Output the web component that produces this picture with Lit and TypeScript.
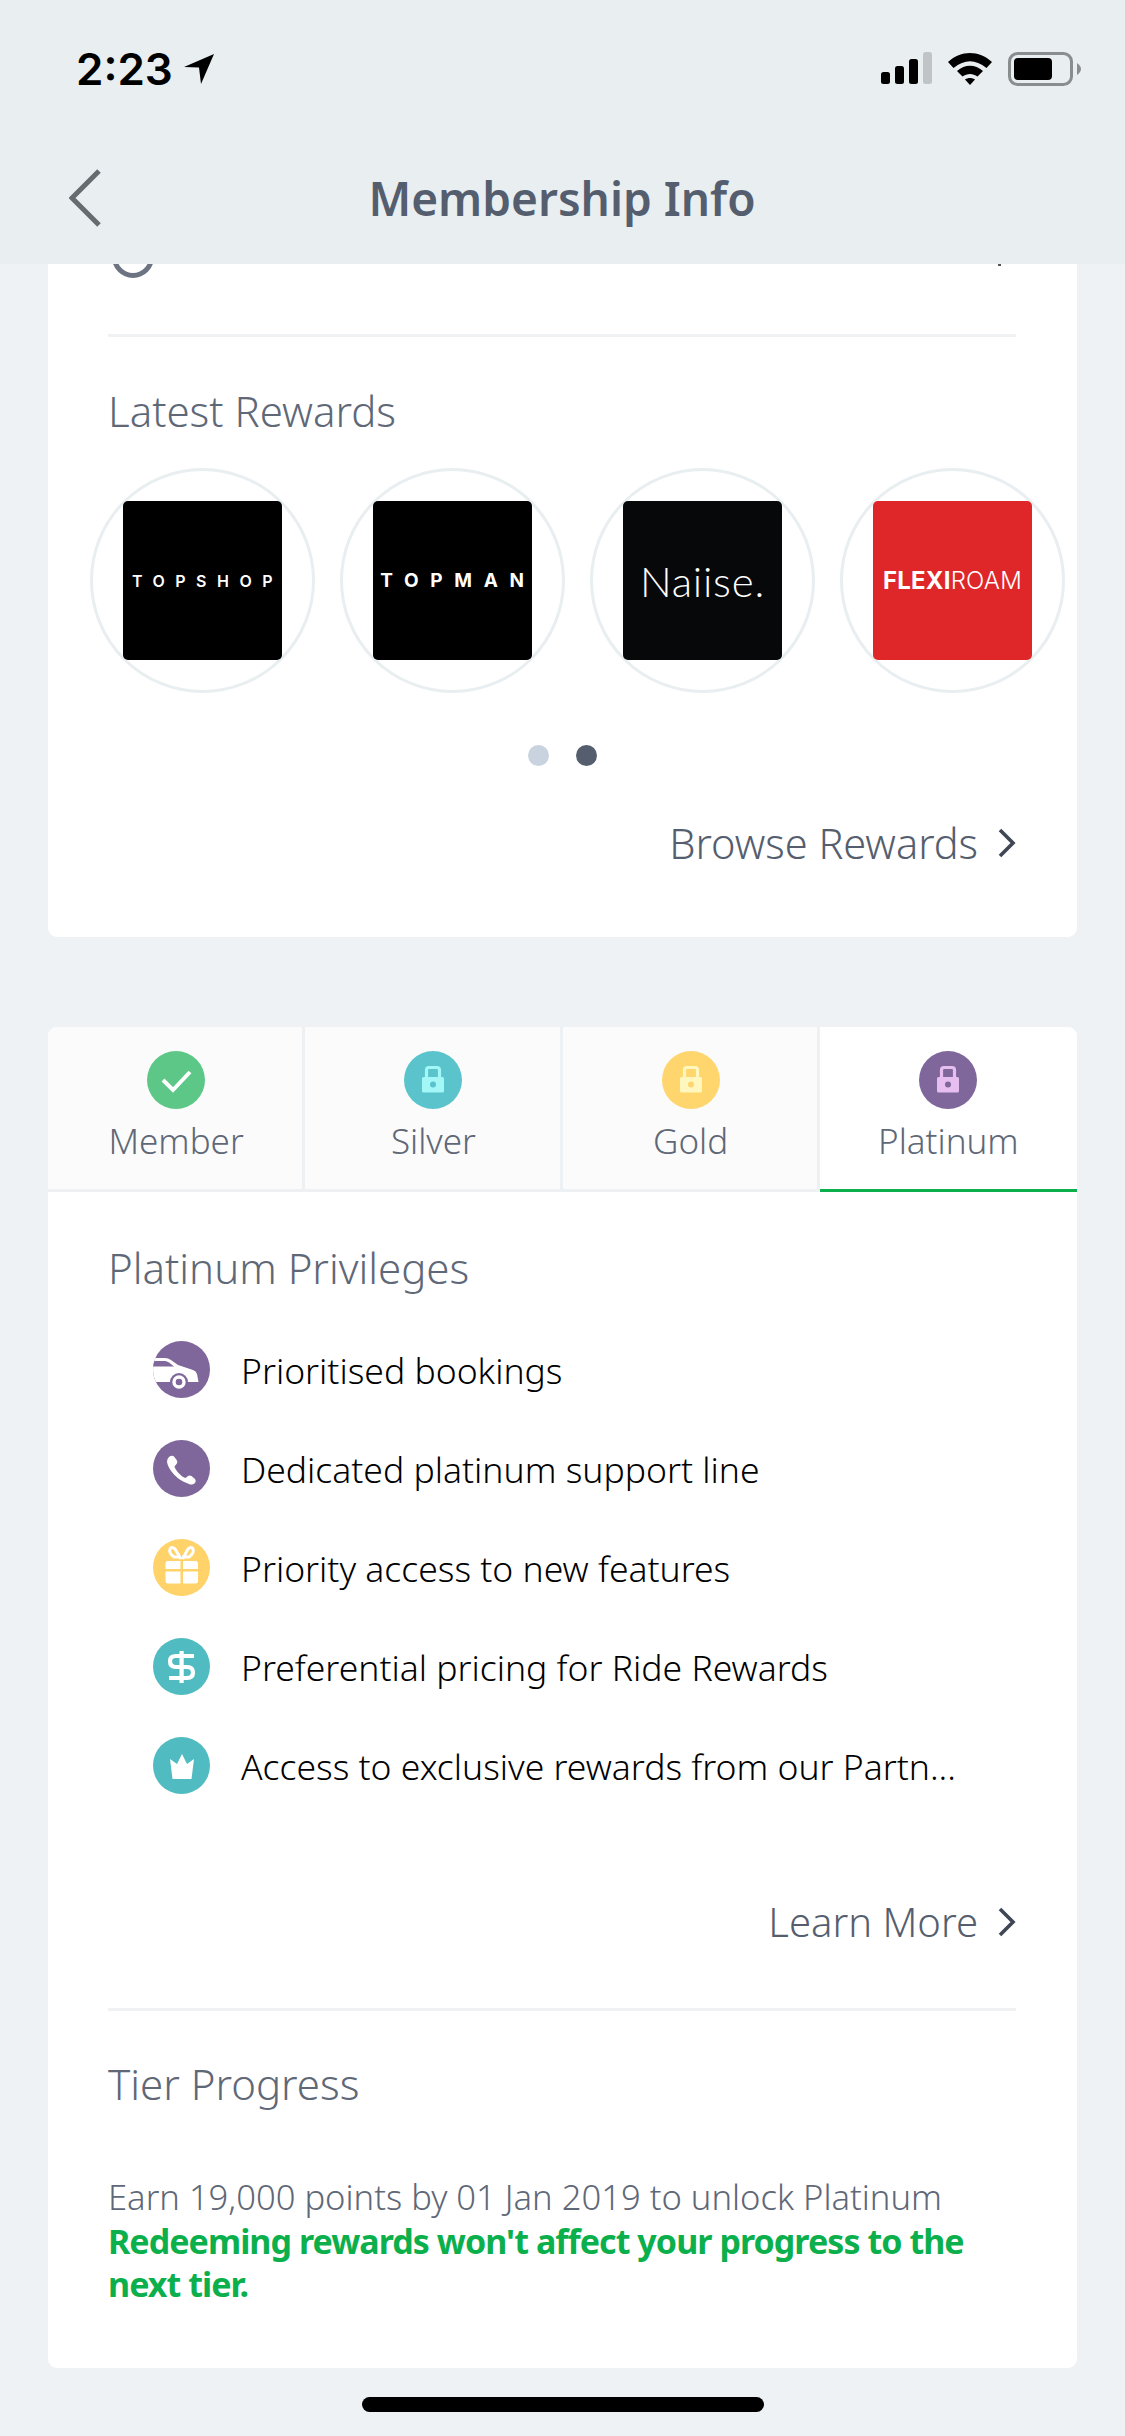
import { LitElement, html, css, svg } from "lit";
import { customElement } from "lit/decorators.js";

const chevron = html`<svg class="chev" viewBox="0 0 19 30" width="19" height="30"><path d="M3 2 L16 15 L3 28" fill="none" stroke="#3f4654" stroke-width="3.6"/></svg>`;

const lock = (metal: string, badge: string) => html`<svg width="58" height="58" viewBox="0 0 58 58">
  <path d="M22.500 28 V19 Q22.500 16.500 25 16.500 H33 Q35.500 16.500 35.500 19 V28" fill="none" stroke="${metal}" stroke-width="3.200"/>
  <rect x="18" y="26" width="22" height="15.500" rx="1.500" fill="${metal}"/>
  <circle cx="29" cy="33.500" r="3" fill="${badge}"/>
</svg>`;

const carIcon = svg`<path d="M0 17 H12 Q15 17 18 19 L25 24 L40 29 Q43 30 44 33 L45.500 41 H0 Z" fill="#fff"/>
  <path d="M0 20 H12 Q14 20 16 21.500 L21 25.500 H0 Z" fill="#7f679b"/>
  <circle cx="26" cy="41" r="9" fill="#7f679b"/>
  <circle cx="26" cy="41" r="5" fill="none" stroke="#fff" stroke-width="3.400"/>`;

const privileges = [
  { color: "#7f679b", text: "Prioritised bookings", icon: carIcon },
  {
    color: "#7f679b",
    text: "Dedicated platinum support line",
    icon: svg`<path d="M16 17 Q19 15 21 16.500 L24 20.500 Q25 22.500 23.500 24 L21.500 26.500 Q22 29 26 33.500 Q30 37.500 32.500 38 L35 36 Q36.500 35 38.500 36 L42 39 Q43.500 41 42 43 Q39 45.500 36 44 Q27 41 21 34.500 Q15 28 14 22 Q13.700 19 16 17 Z" fill="#fff"/>`,
  },
  {
    color: "#ffd369",
    text: "Priority access to new features",
    icon: svg`<path d="M28 20 L22 10 Q18.500 7 17 10 Q15.500 14 21 18 H28 M29.500 20 L35 10 Q38.500 7 40 10 Q41.500 14 36 18 H29" fill="none" stroke="#fff" stroke-width="3"/>
      <path d="M15 22 Q12.500 22 12.500 24.500 V30 H27.500 V22 Z M30 22 V30 H45 V24.500 Q45 22 42.500 22 Z M12.500 32.500 V42 Q12.500 44.500 15 44.500 H27.500 V32.500 Z M30 32.500 V44.500 H42.500 Q45 44.500 45 42 V32.500 Z" fill="#fff"/>`,
  },
  {
    color: "#50bcc1",
    text: "Preferential pricing for Ride Rewards",
    icon: svg`<path d="M41 18 H23 Q17 18 17 23 Q17 29 23 29 H34 Q40 29 40 34.500 Q40 40 34 40 H16" fill="none" stroke="#fff" stroke-width="4.200"/>
      <rect x="26.500" y="13" width="4.200" height="32" fill="#fff"/>`,
  },
  {
    color: "#50bcc1",
    text: "Access to exclusive rewards from our Partn...",
    icon: svg`<path d="M17 22 L24 27 L29 17 L34 27 L41 22 L38.500 42 H19.500 Z" fill="#fff"/>`,
  },
];

const tiers = [
  { name: "Member", color: "#5cc787", active: false, icon: html`<svg width="58" height="58" viewBox="0 0 58 58"><path d="M16 29 L26 39 L43 21" fill="none" stroke="#fff" stroke-width="4"/></svg>` },
  { name: "Silver", color: "#5ac3cb", active: false, icon: lock("#a4f7f7", "#5ac3cb") },
  { name: "Gold", color: "#ffd56e", active: false, icon: lock("#fff7bd", "#ffd56e") },
  { name: "Platinum", color: "#7f679b", active: true, icon: lock("#e6bff0", "#7f679b") },
];

@customElement("app-root")
export class AppRoot extends LitElement {
  static styles = css`
    :host { display: block; width: 1125px; height: 2436px; overflow: hidden; background: #eef2f5;
      font-family: "Noto Sans", "Open Sans", sans-serif; font-weight: 300; color: #000; }
    .page { display: flex; flex-direction: column; height: 2436px; position: relative; }
    .top { background: #e9eef1; height: 264px; flex: none; position: relative; }
    .status { height: 96px; padding: 46px 44px 0 76px; box-sizing: border-box; display: flex; justify-content: space-between; align-items: flex-start; }
    .time { font-family: "Inter", "Liberation Sans", sans-serif; font-weight: 600; font-size: 44px; line-height: 46px; display: flex; align-items: center; gap: 11px; }
    .status-icons { display: flex; gap: 15px; align-items: flex-start; margin-top: 6px; }
    .nav { display: grid; grid-template-columns: 1fr auto 1fr; align-items: center; padding: 72px 0 0 69px; }
    .title { font-size: 46px; font-weight: 600; color: #555e6e; line-height: 60px; transform: translateX(-35px); }
    .card { background: #fff; margin: 0 48px; flex: none; }
    .card1 { padding: 0 61px 0 60px; border-radius: 0 0 9px 9px; height: 673px; box-sizing: border-box; }
    .peek { height: 70px; display: flex; justify-content: space-between; padding: 0 0 0 3px; border-bottom: 3px solid #f0f1f2; box-sizing: content-box; }
    .peek .tip { margin-top: 0; width: 3px; height: 2px; background: #555; margin-right: 15px; }
    h2 { margin: 0; font-size: 42px; font-weight: 300; color: #5f6877; line-height: 54px; }
    .latest { margin-top: 47px; }
    .logos { display: flex; gap: 25px; margin: 30px -48px 0 -18px; }
    .circle { flex: none; width: 225px; height: 225px; box-sizing: border-box; border: 3px solid #e9eef1; border-radius: 50%; display: flex; align-items: center; justify-content: center; }
    .logo { flex: none; width: 159px; height: 159px; box-sizing: border-box; border-radius: 5px; display: flex; align-items: center; justify-content: center; color: #fff; background: #000; white-space: nowrap; }
    .dots { display: flex; justify-content: center; gap: 27px; margin-top: 52px; }
    .dot { width: 21px; height: 21px; border-radius: 50%; background: #c9d3df; }
    .dot.on { background: #555e6e; }
    .link { display: flex; justify-content: flex-end; align-items: center; gap: 19px; color: #555e6e; font-size: 40px; line-height: 54px; }
    .chev { flex: none; }
    .browse { margin-top: 50px; font-size: 41.500px; }
    .gap { height: 90px; flex: none; }
    .card2 { border-radius: 9px; height: 1341px; overflow: hidden; }
    .tabs { display: grid; grid-template-columns: repeat(4, 1fr); height: 165px; }
    .tab { background: #fbfbfb; border-bottom: 3px solid #eef1f4; border-right: 3px solid #eef1f4; display: flex; flex-direction: column; align-items: center; padding: 24px 0 0 2px; box-sizing: border-box; }
    .tab:last-child { border-right: none; padding-left: 0; }
    .tab.active { background: #fff; border-bottom-color: #0bb04c; }
    .badge { width: 58px; height: 58px; border-radius: 50%; }
    .badge svg, .row-icon svg { display: block; }
    .tab span { font-size: 35px; line-height: 50px; color: #5f6877; margin-top: 7px; }
    .body { padding: 49px 61px 0 60px; }
    .list { list-style: none; margin: 46px 0 0; padding: 0 0 0 45px; display: flex; flex-direction: column; gap: 42px; }
    .list li { display: flex; align-items: center; gap: 31px; height: 57px; font-size: 35.500px; white-space: nowrap; }
    .row-icon { width: 57px; height: 57px; border-radius: 50%; flex: none; overflow: hidden; }
    .learn { margin-top: 101px; }
    .rule { height: 3px; background: #f0f1f2; margin-top: 59px; }
    .tier { margin-top: 46px; }
    .text { margin: 62px 0 0; font-size: 34.600px; line-height: 47px; color: #5f6877; }
    .note { margin: 0; font-size: 34px; line-height: 43px; font-weight: 700; color: #0bb04c; letter-spacing: -0.950px; }
    .home { position: absolute; left: 362px; top: 2397px; width: 402px; height: 15px; border-radius: 7.500px; background: #000; }
    .lg-topshop { font-family: "Inter", sans-serif; font-weight: 600; font-size: 16px; letter-spacing: 10.500px; padding-left: 10px; }
    .lg-topman { font-family: "Inter", sans-serif; font-weight: 700; font-size: 19px; letter-spacing: 11.700px; padding-left: 11px; }
    .lg-naiise { background: #07080a; font-family: "Lato", sans-serif; font-weight: 300; font-size: 42px; letter-spacing: 0.800px; }
    .lg-flexi { background: #df2629; font-family: "Inter", sans-serif; font-size: 24px; letter-spacing: 0.200px; }
    .lg-flexi b { font-weight: 700; }
    .lg-flexi i { font-style: normal; font-weight: 300; }
  `;

  render() {
    return html`<div class="page">
      <main style="order:2">
        <section class="card card1">
          <div class="peek">
            <svg width="48" height="15" viewBox="0 0 48 15"><circle cx="22" cy="-7" r="18.500" fill="none" stroke="#6c7482" stroke-width="5"/></svg>
            <div class="tip"></div>
          </div>
          <h2 class="latest">Latest Rewards</h2>
          <div class="logos">
            <div class="circle"><div class="logo lg-topshop">TOPSHOP</div></div>
            <div class="circle"><div class="logo lg-topman">TOPMAN</div></div>
            <div class="circle"><div class="logo lg-naiise">Naiise.</div></div>
            <div class="circle"><div class="logo lg-flexi"><b>FLEXI</b><i>ROAM</i></div></div>
          </div>
          <div class="dots"><div class="dot"></div><div class="dot on"></div></div>
          <div class="link browse">Browse Rewards ${chevron}</div>
        </section>
        <div class="gap"></div>
        <section class="card card2">
          <div class="tabs">
            ${tiers.map((t) => html`<div class="tab ${t.active ? "active" : ""}">
              <div class="badge" style="background:${t.color}">${t.icon}</div>
              <span>${t.name}</span>
            </div>`)}
          </div>
          <div class="body">
            <h2>Platinum Privileges</h2>
            <ul class="list">
              ${privileges.map((p) => html`<li>
                <div class="row-icon" style="background:${p.color}"><svg width="57" height="57" viewBox="0 0 57 57">${p.icon}</svg></div>
                ${p.text}
              </li>`)}
            </ul>
            <div class="link learn">Learn More ${chevron}</div>
            <div class="rule"></div>
            <h2 class="tier">Tier Progress</h2>
            <p class="text">Earn 19,000 points by 01 Jan 2019 to unlock Platinum</p>
            <p class="note">Redeeming rewards won't affect your progress to the next tier.</p>
          </div>
        </section>
      </main>
      <header class="top" style="order:1">
        <div class="status">
          <div class="time">2:23
            <svg width="32" height="32" viewBox="0 0 32 32"><path d="M30 1 L0 14 L15 14.500 L17 31 Z" fill="#000"/></svg>
          </div>
          <div class="status-icons">
            <svg width="51" height="33" viewBox="0 0 51 33">
              <rect x="0" y="20" width="9" height="12" rx="2.500" fill="#000"/>
              <rect x="14" y="14" width="9" height="18" rx="2.500" fill="#000"/>
              <rect x="28" y="7" width="9" height="25" rx="2.500" fill="#000"/>
              <rect x="42" y="0" width="9" height="32" rx="2.500" fill="#c1c4c6"/>
            </svg>
            <svg width="46" height="33" viewBox="0 0 46 33">
              <path d="M1 10 C14 -2 32 -2 45 10 L39.500 16 C28 7 18 7 6.500 16 Z" fill="#000"/>
              <path d="M10 19 C18 12 28 12 36 19 L30.500 24.500 C26 21 20 21 15.500 24.500 Z" fill="#000"/>
              <path d="M18 27.500 C21 25.500 25 25.500 28 27.500 L23 33 Z" fill="#000"/>
            </svg>
            <svg width="73" height="34" viewBox="0 0 73 34">
              <rect x="1.500" y="1.500" width="62" height="31" rx="8" fill="none" stroke="#8a8d90" stroke-width="3"/>
              <rect x="6" y="6" width="38" height="22" rx="4" fill="#000"/>
              <path d="M69 11 Q73 14 73 17 Q73 20 69 23 Z" fill="#8a8d90"/>
            </svg>
          </div>
        </div>
        <nav class="nav">
          <svg width="32" height="58" viewBox="0 0 32 58"><path d="M30 2 L3 29 L30 56" fill="none" stroke="#666b70" stroke-width="5"/></svg>
          <div class="title">Membership Info</div>
        </nav>
      </header>
      <div class="home"></div>
    </div>`;
  }
}
